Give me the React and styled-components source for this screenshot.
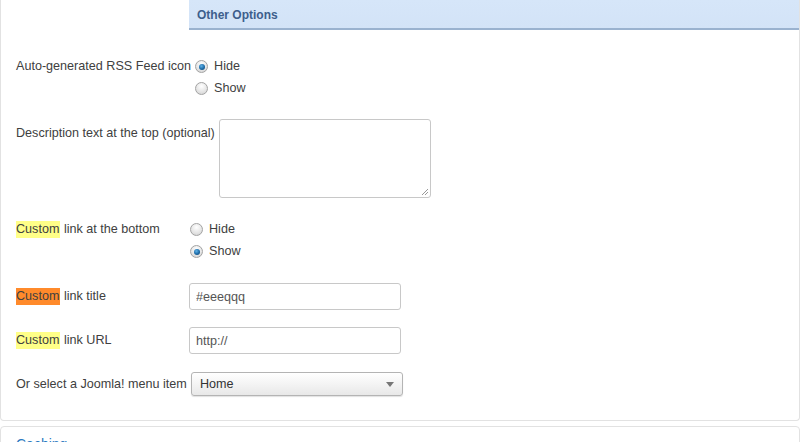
import styled, { createGlobalStyle } from 'styled-components';

const GlobalStyle = createGlobalStyle`
  html, body {
    margin: 0;
    padding: 0;
    background: #fff;
  }
  body {
    font-family: "Liberation Sans", Arial, sans-serif;
    font-size: 12.6px;
    color: #404040;
  }
`;

const Radio = ({ checked, label }) => (
  <RadioRow>
    <RadioDot checked={checked} />
    <RadioLabel>{label}</RadioLabel>
  </RadioRow>
);

const App = () => {
  return (
    <Page>
      <GlobalStyle />
      <Panel>
        <HeaderRow>
          <HeaderBar>Other Options</HeaderBar>
        </HeaderRow>
        <Form>
          <Row $top={28}>
            <Label $gap={4}>Auto-generated RSS Feed icon</Label>
            <RadioGroup>
              <Radio checked label="Hide" />
              <Radio label="Show" />
            </RadioGroup>
          </Row>
          <Row $top={22}>
            <Label $gap={4} $pad={6}>Description text at the top (optional)</Label>
            <TextArea />
          </Row>
          <Row $top={23}>
            <Label $gap={1}>
              <Mark>Custom</Mark> link at the bottom
            </Label>
            <RadioGroup>
              <Radio label="Hide" />
              <Radio checked label="Show" />
            </RadioGroup>
          </Row>
          <Row $top={23} $center>
            <Label>
              <Mark $orange>Custom</Mark> link title
            </Label>
            <TextInput defaultValue="#eeeqqq" />
          </Row>
          <Row $top={17} $center>
            <Label>
              <Mark>Custom</Mark> link URL
            </Label>
            <TextInput defaultValue="http://" />
          </Row>
          <Row $top={18} $center>
            <Label $gap={2}>Or select a Joomla! menu item</Label>
            <Select>
              <span>Home</span>
              <Caret />
            </Select>
          </Row>
        </Form>
      </Panel>
      <NextPanel>
        <NextTitle>Caching</NextTitle>
      </NextPanel>
    </Page>
  );
};
export default App;

const Page = styled.div`
  width: 800px;
  height: 442px;
  overflow: hidden;
  background: #fff;
`;
const Panel = styled.div`
  height: 421px;
  box-sizing: border-box;
  border: 1px solid #e2e2e2;
  border-top: none;
  border-radius: 0 0 4px 4px;
  display: flex;
  flex-direction: column;
`;
const HeaderRow = styled.div`
  display: flex;
  justify-content: flex-end;
`;
const HeaderBar = styled.div`
  width: 602px;
  height: 28px;
  box-sizing: content-box;
  background: linear-gradient(#d6e6f9, #d3e3f7);
  border-bottom: 2px solid #9ab2cf;
  padding-left: 8px;
  font-family: "Liberation Sans", Arial, sans-serif;
  font-weight: bold;
  font-size: 12px;
  line-height: 30px;
  color: #3d5e8c;
`;
const Form = styled.div`
  display: flex;
  flex-direction: column;
  padding-left: 15px;
`;
const Row = styled.div`
  display: flex;
  align-items: ${(p) => (p.$center ? 'center' : 'flex-start')};
  margin-top: ${(p) => p.$top}px;
`;
const Label = styled.div`
  min-width: 173px;
  margin-right: ${(p) => p.$gap || 0}px;
  padding-top: ${(p) => p.$pad || 0}px;
  line-height: 17px;
  white-space: nowrap;
`;
const Mark = styled.span`
  background: ${(p) => (p.$orange ? '#ff8a2b' : '#ffff88')};
  display: inline-block;
  padding: 0 1px 0 0;
`;
const RadioGroup = styled.div`
  display: flex;
  flex-direction: column;
  gap: 5px;
`;
const RadioRow = styled.div`
  display: flex;
  align-items: center;
  height: 17px;
`;
const RadioDot = styled.span`
  width: 11px;
  height: 11px;
  border-radius: 50%;
  border: 1px solid #a3a3a3;
  background: radial-gradient(circle at 50% 30%, #ffffff 0%, #e6e6e6 55%, #cfcfcf 100%);
  margin-right: 6px;
  position: relative;
  &::after {
    content: '';
    display: ${(p) => (p.checked ? 'block' : 'none')};
    position: absolute;
    left: 2.5px;
    top: 2.5px;
    width: 6px;
    height: 6px;
    border-radius: 50%;
    background: radial-gradient(circle at 40% 35%, #5fb2e8 0%, #1c6aa6 55%, #0d3f6b 100%);
  }
`;
const RadioLabel = styled.span`
  line-height: 17px;
`;
const TextArea = styled.div`
  width: 210px;
  height: 77px;
  border: 1px solid #c8c8c8;
  border-radius: 3px;
  background: #fff;
  position: relative;
  &::after {
    content: '';
    position: absolute;
    right: 2px;
    bottom: 2px;
    width: 6px;
    height: 6px;
    background: linear-gradient(135deg, transparent 45%, #999 45%, #999 55%, transparent 55%, transparent 70%, #999 70%, #999 80%, transparent 80%);
  }
`;
const TextInput = styled.input`
  width: 212px;
  height: 27px;
  box-sizing: border-box;
  border: 1px solid #c8c8c8;
  border-radius: 3px;
  padding: 0 6px;
  font-family: "Liberation Sans", Arial, sans-serif;
  font-size: 12.6px;
  color: #555;
  outline: none;
`;
const Select = styled.div`
  width: 212px;
  height: 24px;
  box-sizing: border-box;
  border: 1px solid #b4b4b4;
  border-radius: 3px;
  background: linear-gradient(#ffffff, #f4f4f4 50%, #e8e8e8);
  box-shadow: 0 1px 1px rgba(0, 0, 0, 0.12);
  display: flex;
  align-items: center;
  justify-content: space-between;
  padding: 0 8px 0 8px;
  color: #333;
`;
const Caret = styled.span`
  width: 0;
  height: 0;
  border-left: 4px solid transparent;
  border-right: 4px solid transparent;
  border-top: 5px solid #777;
`;
const NextPanel = styled.div`
  margin-top: 5px;
  height: 40px;
  border: 1px solid #e2e2e2;
  border-radius: 4px 4px 0 0;
  padding: 9px 0 0 15px;
  box-sizing: border-box;
`;
const NextTitle = styled.div`
  font-size: 14px;
  color: #2a78c0;
  line-height: 16px;
`;
